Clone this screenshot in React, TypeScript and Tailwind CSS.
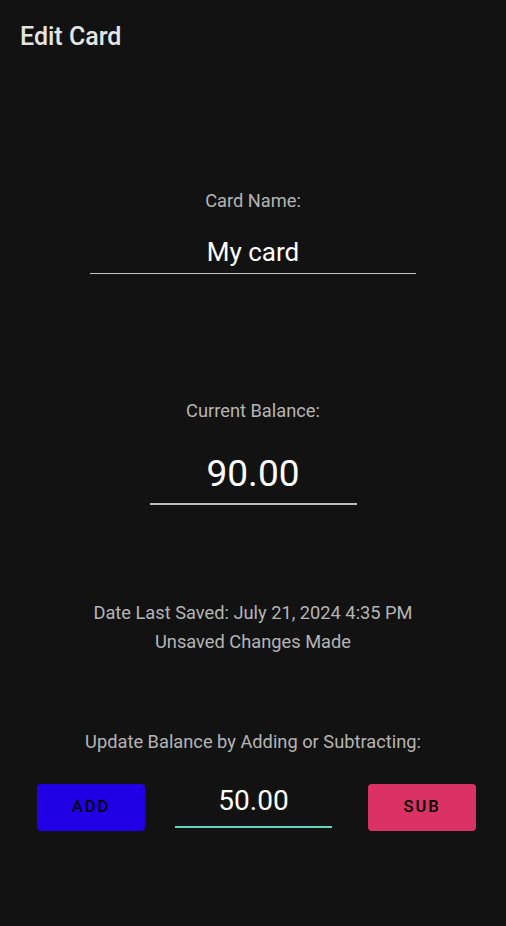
export default function App() {
  return (
    <div className="w-[506px] h-[926px] bg-[#121212] font-['Roboto',sans-serif] flex flex-col">
      {/* toolbar */}
      <div className="pt-[22px] pl-[20px]">
        <h1 className="text-[25px] leading-[30px] font-medium text-[#e4e4e4]">Edit Card</h1>
      </div>

      {/* card name */}
      <div className="mt-[137px] flex flex-col items-center">
        <div className="text-[18.25px] leading-[24px] text-[#b5b5b5]">Card Name:</div>
        <div className="mt-[23px] w-[326px] pb-[5px] border-b border-[#c4c4c4] text-center text-[26px] leading-[32px] text-white">
          My card
        </div>
      </div>

      {/* balance */}
      <div className="mt-[125px] flex flex-col items-center">
        <div className="text-[18.25px] leading-[24px] text-[#b5b5b5]">Current Balance:</div>
        <div className="mt-[29px] w-[207px] pb-[7px] border-b-2 border-[#bdbdbd] text-center text-[37px] leading-[44px] text-white">
          90.00
        </div>
      </div>

      {/* save status */}
      <div className="mt-[93px] flex flex-col items-center text-[18.25px] leading-[29px] text-[#b5b5b5]">
        <div>Date Last Saved: July 21, 2024 4:35 PM</div>
        <div>Unsaved Changes Made</div>
      </div>

      {/* update balance */}
      <div className="mt-[74px] flex flex-col items-center">
        <div className="text-[18.25px] leading-[24px] text-[#b5b5b5]">Update Balance by Adding or Subtracting:</div>
      </div>

      <div className="mt-[30px] pl-[37px] flex items-start">
        <button className="w-[108px] h-[47px] rounded-[4px] bg-[#2200e6] text-black text-[16.5px] font-medium tracking-[2px] flex items-center justify-center">
          ADD
        </button>
        <div className="ml-[30px] w-[157px] pb-[8px] border-b-2 border-[#62d6c2] text-center text-[28px] leading-[34px] text-white">
          50.00
        </div>
        <button className="ml-[36px] w-[108px] h-[47px] rounded-[4px] bg-[#da3264] text-black text-[16.5px] font-medium tracking-[2px] flex items-center justify-center">
          SUB
        </button>
      </div>
    </div>
  );
}
